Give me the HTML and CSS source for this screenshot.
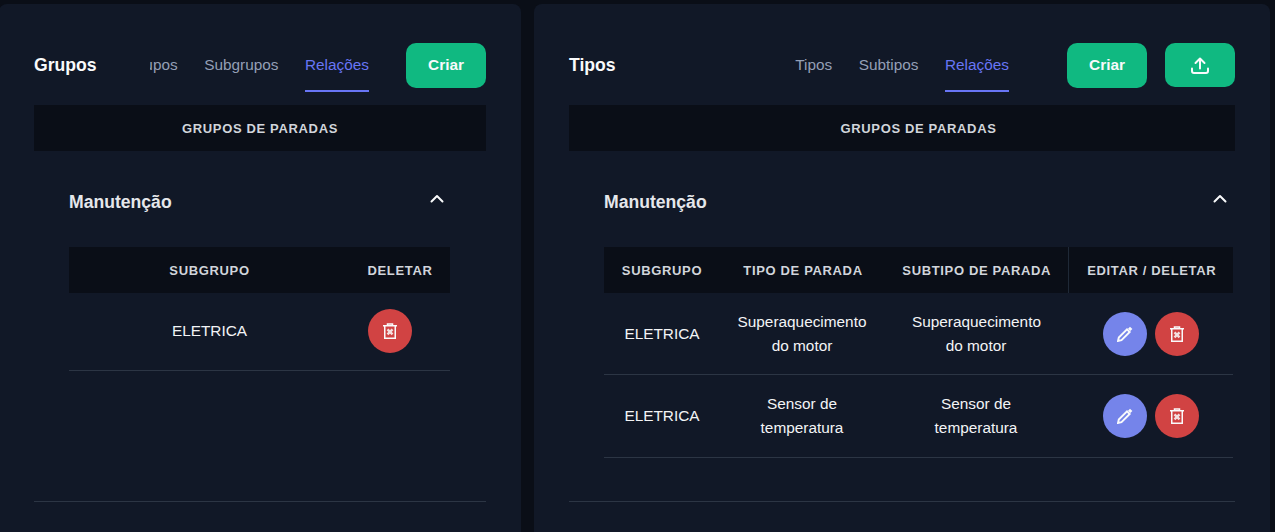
FILE: index.html
```html
<!DOCTYPE html>
<html lang="pt-BR">
<head>
<meta charset="utf-8">
<title>Paradas</title>
<link rel="stylesheet" href="styles.css">
</head>
<body>
<main class="page">
  <section class="panel panel-left">
    <header class="head">
      <h2 class="title">Grupos</h2>
      <nav class="tabs tabs-left">
        <a class="tab">Grupos</a>
        <a class="tab">Subgrupos</a>
        <a class="tab active">Relações</a>
      </nav>
      <button class="btn btn-create">Criar</button>
    </header>
    <div class="bar">GRUPOS DE PARADAS</div>
    <div class="group">
      <div class="group-head">
        <h3 class="group-title">Manutenção</h3>
        <svg class="chevron" viewBox="0 0 14 9"><path d="M1.500 7.500 7 2l5.500 5.500"/></svg>
      </div>
      <table class="grid grid-left">
        <colgroup><col class="c-l1"><col class="c-l2"></colgroup>
        <thead><tr><th>SUBGRUPO</th><th>DELETAR</th></tr></thead>
        <tbody>
          <tr>
            <td>ELETRICA</td>
            <td class="cell-delete"><button class="round red"><svg class="ico" viewBox="0 0 14 16"><path d="M0 2.750h14M4.500 2.500V.9h5v1.600M1.750 2.750v12.500h10.500V2.750"/><path d="m4.500 6.300 5 5M9.500 6.300l-5 5" class="thick"/></svg></button></td>
          </tr>
        </tbody>
      </table>
    </div>
    <hr class="rule">
  </section>

  <section class="panel panel-right">
    <header class="head">
      <h2 class="title">Tipos</h2>
      <nav class="tabs tabs-right">
        <a class="tab">Tipos</a>
        <a class="tab">Subtipos</a>
        <a class="tab active">Relações</a>
      </nav>
      <button class="btn btn-create">Criar</button>
      <button class="btn btn-upload"><svg class="upload" viewBox="0 0 18 17"><path d="M1 11.500V14a2 2 0 0 0 2 2h12a2 2 0 0 0 2-2v-2.500M9 11.500V1.500M4.500 6 9 1.500 13.500 6"/></svg></button>
    </header>
    <div class="bar">GRUPOS DE PARADAS</div>
    <div class="group">
      <div class="group-head">
        <h3 class="group-title">Manutenção</h3>
        <svg class="chevron" viewBox="0 0 14 9"><path d="M1.500 7.500 7 2l5.500 5.500"/></svg>
      </div>
      <table class="grid grid-right">
        <colgroup><col class="c-r1"><col class="c-r2"><col class="c-r3"><col class="c-r4"></colgroup>
        <thead><tr><th>SUBGRUPO</th><th>TIPO DE PARADA</th><th>SUBTIPO DE PARADA</th><th class="divided">EDITAR / DELETAR</th></tr></thead>
        <tbody>
          <tr>
            <td>ELETRICA</td>
            <td>Superaquecimento do motor</td>
            <td class="narrow">Superaquecimento do motor</td>
            <td><div class="actions">
              <button class="round indigo"><svg class="ico pencil" viewBox="0 0 16 16"><path d="M1 15l.8-3.500L10 3.300l2.700 2.700-8.200 8.200z"/><path d="m12 1.700 2.400 2.400" class="thick"/></svg></button>
              <button class="round red"><svg class="ico" viewBox="0 0 14 16"><path d="M0 2.750h14M4.500 2.500V.9h5v1.600M1.750 2.750v12.500h10.500V2.750"/><path d="m4.500 6.300 5 5M9.500 6.300l-5 5" class="thick"/></svg></button>
            </div></td>
          </tr>
          <tr class="row-tall">
            <td>ELETRICA</td>
            <td>Sensor de temperatura</td>
            <td class="narrow">Sensor de temperatura</td>
            <td><div class="actions">
              <button class="round indigo"><svg class="ico pencil" viewBox="0 0 16 16"><path d="M1 15l.8-3.500L10 3.300l2.700 2.700-8.200 8.200z"/><path d="m12 1.700 2.400 2.400" class="thick"/></svg></button>
              <button class="round red"><svg class="ico" viewBox="0 0 14 16"><path d="M0 2.750h14M4.500 2.500V.9h5v1.600M1.750 2.750v12.500h10.500V2.750"/><path d="m4.500 6.300 5 5M9.500 6.300l-5 5" class="thick"/></svg></button>
            </div></td>
          </tr>
        </tbody>
      </table>
    </div>
    <hr class="rule">
  </section>
</main>
</body>
</html>
```
FILE: styles.css
```css
* { box-sizing: border-box; }
html, body { margin: 0; height: 100%; overflow: hidden; background: #0a0e17; }
body { font-family: "Liberation Sans", Arial, sans-serif; color: #f3f4f6; }

.page { display: flex; gap: 13px; padding-top: 4px; align-items: flex-start; }

.panel { background: #111827; border-radius: 8px 8px 0 0; height: 528px; padding: 39px 35px 0; flex: none; position: relative; overflow: hidden; }
.panel-left { width: 522px; margin-left: -1px; }
.panel-right { width: 736px; }

.head { display: flex; align-items: flex-start; height: 62px; }
.title { margin: 0; font-size: 17.600px; line-height: 44px; font-weight: 700; color: #f9fafb; }

.tabs { display: flex; justify-content: flex-end; gap: 26.500px; overflow: hidden; flex: none; height: 49px; }
.tabs-left { width: 219px; margin-left: auto; margin-right: 37px; }
.tabs-right { margin-left: auto; margin-right: 58px; }
.tab { flex: none; font-size: 15.360px; line-height: 44px; height: 49px; color: #949fb6; border-bottom: 2px solid transparent; }
.tab.active { color: #6875f5; border-bottom-color: #6875f5; }

.btn { border: 0; background: #10b981; color: #f9fafb; border-radius: 10px; font-family: inherit; font-size: 15.360px; font-weight: 700; display: flex; align-items: center; justify-content: center; padding: 0 0 2px; flex: none; }
.btn-create { width: 80px; height: 45px; }
.btn-upload { width: 70px; height: 44px; margin-left: 18px; padding: 0; }
.upload { width: 18px; height: 17px; fill: none; stroke: #f9fafb; stroke-width: 2; stroke-linecap: round; stroke-linejoin: round; }

.bar { height: 46px; background: #0a0e17; color: #d1d5db; font-size: 13px; font-weight: 700; letter-spacing: .65px; display: flex; align-items: center; justify-content: center; }
.panel-right .bar { padding-left: 33px; }

.group { padding: 0 35px; height: 350px; }
.panel-right .group { padding-right: 0; }
.group-head { display: flex; align-items: center; justify-content: space-between; height: 96px; padding-top: 6px; }
.group-title { margin: 0; font-size: 17.600px; font-weight: 700; color: #e5e7eb; }
.chevron { width: 14px; height: 9px; margin-right: 8px; margin-top: -7px; fill: none; stroke: #f9fafb; stroke-width: 2; stroke-linecap: round; stroke-linejoin: round; }
.panel-left .chevron { margin-right: 7px; }

.grid { border-collapse: collapse; table-layout: fixed; font-size: 15.360px; }
.grid-left { width: 381px; }
.grid-right { width: 629px; }
.c-l1 { width: 281px; } .c-l2 { width: 100px; }
.c-r1 { width: 116px; } .c-r2 { width: 164px; } .c-r3 { width: 184px; } .c-r4 { width: 165px; }

.grid th { background: #0a0e17; height: 46px; padding: 0; font-size: 13px; font-weight: 700; letter-spacing: .65px; color: #d1d5db; text-align: center; }
.grid-right th + th { padding-left: 2px; }
.grid th.divided { border-left: 1px solid #1f2937; }
.grid td { text-align: center; padding: 17px 16px 16px; line-height: 24px; color: #f3f4f6; border-bottom: 1px solid #2c3544; }
.grid td.narrow { padding-left: 28px; padding-right: 28px; }
.row-tall td { padding-bottom: 17px; }
.grid-left td { padding: 16px 0 17px; }
.grid-left td.cell-delete { text-align: left; padding-left: 18px; }

.actions { display: flex; justify-content: center; gap: 8px; }
.round { width: 44px; height: 44px; border-radius: 50%; border: 0; padding: 0; display: inline-flex; align-items: center; justify-content: center; vertical-align: middle; }
.red { background: #d14343; }
.indigo { background: #7584ea; }
.ico { width: 16px; height: 16px; fill: none; stroke: #f9fafb; stroke-width: 1.500; }
.ico .thick { stroke-width: 2.400; opacity: .85; }
.pencil { stroke-width: 1.900; }
.pencil .thick { stroke-width: 2.800; opacity: 1; }

.rule { position: absolute; left: 35px; right: 35px; top: 497px; margin: 0; border: 0; border-top: 1px solid #2c3544; }
```
